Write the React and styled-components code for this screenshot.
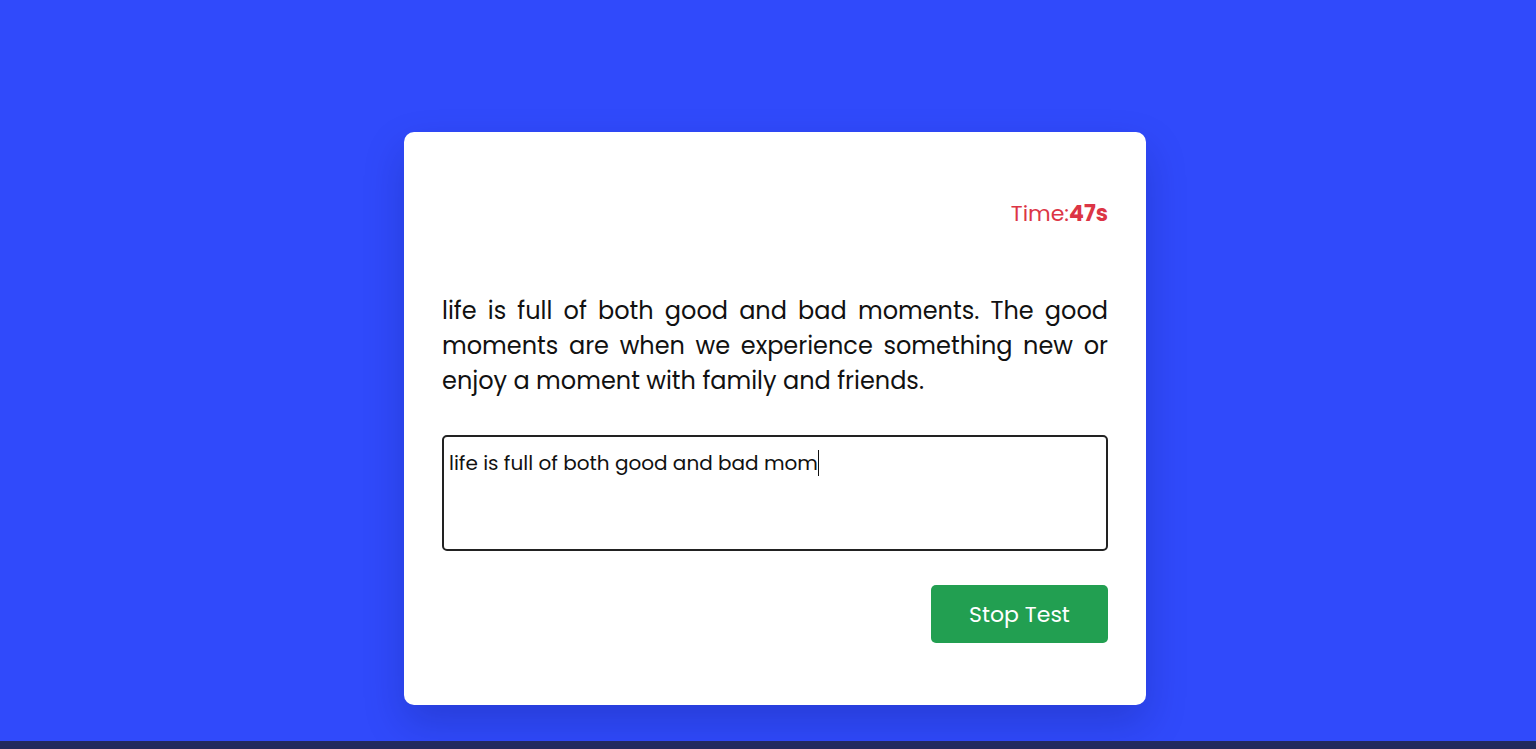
import React from "react";
import styled, { createGlobalStyle } from "styled-components";

const Global = createGlobalStyle`
  html, body { margin: 0; padding: 0; }
  body {
    background: #304afb;
    font-family: Poppins, "Open Sans", "Liberation Sans", sans-serif;
    overflow: hidden;
  }
`;

const Page = styled.div`
  height: 749px;
  display: flex;
  flex-direction: column;
`;

const Stage = styled.main`
  flex: 1;
  display: flex;
  justify-content: center;
  align-items: flex-start;
  padding: 132px 0 0 14px;
`;

const Card = styled.section`
  width: 742px;
  height: 573px;
  box-sizing: border-box;
  background: #fff;
  border-radius: 10px;
  padding: 64px 38px 62px 38px;
  display: flex;
  flex-direction: column;
  box-shadow: 0 18px 40px rgba(10, 20, 90, 0.22);
`;

const Timer = styled.div`
  align-self: flex-end;
  color: #dc3545;
  font-size: 22px;
  line-height: 36px;
`;

const TimeValue = styled.b`
  font-weight: 700;
`;

const Quote = styled.p`
  margin: 61px 0 0;
  font-size: 24px;
  line-height: 35px;
  text-align: justify;
  color: #111;
`;

const TypeBox = styled.div`
  margin-top: 37px;
  height: 116px;
  box-sizing: border-box;
  border: 2px solid #222;
  border-radius: 5px;
  padding: 12px 5px;
  font-size: 20px;
  line-height: 28px;
  color: #111;
`;

const Caret = styled.span`
  display: inline-block;
  width: 1px;
  height: 26px;
  background: #111;
  vertical-align: -6px;
`;

const Actions = styled.div`
  margin-top: 34px;
  display: flex;
  justify-content: flex-end;
`;

const Button = styled.button`
  width: 177px;
  height: 58px;
  border: none;
  border-radius: 5px;
  background: #229f51;
  color: #fff;
  font-family: inherit;
  font-size: 22px;
  cursor: pointer;
`;

const TaskStrip = styled.div`
  height: 8px;
  background: #222a5e;
`;

export default function App() {
  return (
    <Page>
      <Global />
      <Stage>
        <Card>
          <Timer>
            Time:<TimeValue>47s</TimeValue>
          </Timer>
          <Quote>
            life is full of both good and bad moments. The good moments are when we
            experience something new or enjoy a moment with family and friends.
          </Quote>
          <TypeBox>
            life is full of both good and bad mom<Caret />
          </TypeBox>
          <Actions>
            <Button>Stop Test</Button>
          </Actions>
        </Card>
      </Stage>
      <TaskStrip />
    </Page>
  );
}
